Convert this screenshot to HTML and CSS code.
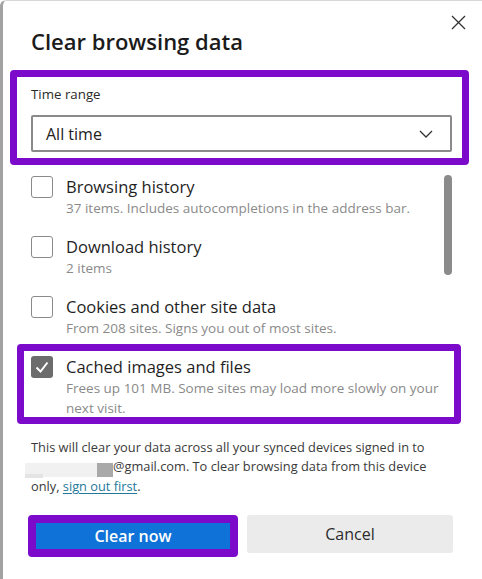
FILE: index.html
```html
<!DOCTYPE html>
<html lang="en">
<head>
    <meta charset="UTF-8">
    <meta name="viewport" content="width=device-width, initial-scale=1.0">
    <title>Clear browsing data</title>
    <link rel="stylesheet" href="styles.css">
</head>
<body>

<div class="dialog">
    <div class="dialog-header">
        <h1 class="dialog-title">Clear browsing data</h1>
        <button class="close-button" aria-label="Close">
            <svg width="15" height="15" viewBox="0 0 15 15">
                <path d="M1 1 L14 14 M14 1 L1 14" stroke="#333" stroke-width="1.3" fill="none"/>
            </svg>
        </button>
    </div>

    <!-- Time range -->
    <div class="highlight range-box">
        <label class="range-label" for="timeRange">Time range</label>
        <div class="select" id="timeRange">
            <span>All time</span>
            <svg width="14" height="8" viewBox="0 0 14 8">
                <polyline points="1,1 7,7 13,1" stroke="#333" stroke-width="1.3" fill="none"/>
            </svg>
        </div>
    </div>

    <!-- Data types -->
    <div class="options">
        <div class="scroll-thumb"></div>

        <div class="option">
            <span class="checkbox"></span>
            <div class="option-text">
                <div class="option-title">Browsing history</div>
                <div class="option-desc">37 items. Includes autocompletions in the address bar.</div>
            </div>
        </div>

        <div class="option">
            <span class="checkbox"></span>
            <div class="option-text">
                <div class="option-title">Download history</div>
                <div class="option-desc">2 items</div>
            </div>
        </div>

        <div class="option">
            <span class="checkbox"></span>
            <div class="option-text">
                <div class="option-title">Cookies and other site data</div>
                <div class="option-desc">From 208 sites. Signs you out of most sites.</div>
            </div>
        </div>

        <div class="highlight option-box">
            <div class="option">
                <span class="checkbox checked">
                    <svg width="22" height="22" viewBox="0 0 22 22">
                        <polyline points="5.5,11.5 9.5,15.5 16.5,6.5" stroke="#fff" stroke-width="2" fill="none"/>
                    </svg>
                </span>
                <div class="option-text">
                    <div class="option-title">Cached images and files</div>
                    <div class="option-desc">Frees up 101 MB. Some sites may load more slowly on your next visit.</div>
                </div>
            </div>
        </div>
    </div>

    <p class="info">
        This will clear your data across all your synced devices signed in to<br>
        <span class="blur-light"></span><span class="blur-dark"></span>@gmail.com. To clear browsing data from this device<br>
        only, <a href="#" class="info-link">sign out first</a>.
    </p>

    <div class="actions">
        <div class="highlight button-box">
            <button class="primary-button">Clear now</button>
        </div>
        <button class="secondary-button">Cancel</button>
    </div>
</div>

</body>
</html>
```

FILE: styles.css
```css
body {
    margin: 0;
    background-color: #fff;
    font-family: "Open Sans", "Noto Sans", sans-serif;
    color: #1f1f1f;
}

.dialog {
    box-sizing: border-box;
    height: 579px;
    border-left: 3px solid #a2a2a2;
    border-top: 1px solid #d8d8d8;
    border-top-left-radius: 6px;
    overflow: hidden;
}

.dialog-header {
    display: flex;
    justify-content: space-between;
    align-items: flex-start;
    height: 69px;
    padding: 0 16px 0 28px;
}

.dialog-title {
    margin: 25px 0 0;
    font-size: 22px;
    line-height: 30px;
    font-weight: 600;
    color: #1b1b1b;
}

.close-button {
    margin-top: 14px;
    padding: 0;
    border: none;
    background: none;
    width: 15px;
    height: 15px;
    line-height: 0;
}

/* purple annotation frames */
.highlight {
    box-sizing: border-box;
    border: 7px solid #7c0acb;
    border-radius: 4px;
}

.range-box {
    width: 459px;
    margin-left: 7px;
    padding: 8px 10px 6px 14px;
}

.range-label {
    display: block;
    font-size: 13.3px;
    line-height: 18px;
    color: #2b2b2b;
}

.select {
    box-sizing: border-box;
    display: flex;
    align-items: center;
    justify-content: space-between;
    height: 37px;
    margin-top: 12px;
    padding: 0 17px 0 13px;
    border: 2px solid #8a8a8a;
    border-radius: 2px;
    font-size: 16px;
    color: #222;
}

.options {
    position: relative;
    margin-top: 11px;
    padding-left: 28px;
}

.scroll-thumb {
    position: absolute;
    top: -1px;
    right: 30px;
    width: 8px;
    height: 100px;
    border-radius: 4px;
    background-color: #8b8b8b;
}

.option {
    display: flex;
    align-items: flex-start;
    gap: 13px;
    height: 42px;
}

.option + .option {
    margin-top: 18px;
}

.checkbox {
    box-sizing: border-box;
    flex: none;
    width: 22px;
    height: 22px;
    border: 1px solid #8a8a8a;
    border-radius: 3px;
    background-color: #fff;
}

.checkbox.checked {
    border: none;
    background-color: #6c6c6c;
    line-height: 0;
}

.option-title {
    font-size: 16.5px;
    line-height: 22px;
    color: #1f1f1f;
}

.option-desc {
    font-size: 13.5px;
    line-height: 20px;
    color: #8a8a8a;
}

.option-box {
    width: 444px;
    height: 80px;
    margin: 6px 0 0 -14px;
    padding: 5px 0 0 7px;
}

.info {
    margin: 14px 0 0;
    padding-left: 28px;
    font-size: 12.8px;
    line-height: 19px;
    color: #3a3a3a;
}

.blur-light {
    position: relative;
    display: inline-block;
    width: 72px;
    height: 14px;
    margin-left: -6px;
    vertical-align: -6px;
    background-color: #f1f1f1;
}

.blur-light::after {
    content: "";
    position: absolute;
    left: 0;
    top: 11px;
    width: 18px;
    height: 4px;
    background-color: #e4e4e4;
}

.blur-dark {
    display: inline-block;
    width: 16px;
    height: 14px;
    vertical-align: -6px;
    background-color: #a9a9a9;
}

.info-link {
    color: #24789a;
    text-decoration: underline;
    text-underline-offset: 2px;
}

.actions {
    display: flex;
    align-items: flex-start;
    margin-top: 19px;
    padding-left: 25px;
}

.button-box {
    width: 210px;
    height: 42px;
    border-width: 8px;
}

.primary-button {
    display: block;
    width: 100%;
    height: 100%;
    border: none;
    background-color: #0e72d8;
    color: #fff;
    font-family: inherit;
    font-size: 16px;
    font-weight: 600;
    cursor: pointer;
}

.secondary-button {
    width: 206px;
    height: 38px;
    margin-left: 9px;
    border: none;
    border-radius: 3px;
    background-color: #ebebeb;
    color: #2b2b2b;
    font-family: inherit;
    font-size: 16px;
    cursor: pointer;
}
```
